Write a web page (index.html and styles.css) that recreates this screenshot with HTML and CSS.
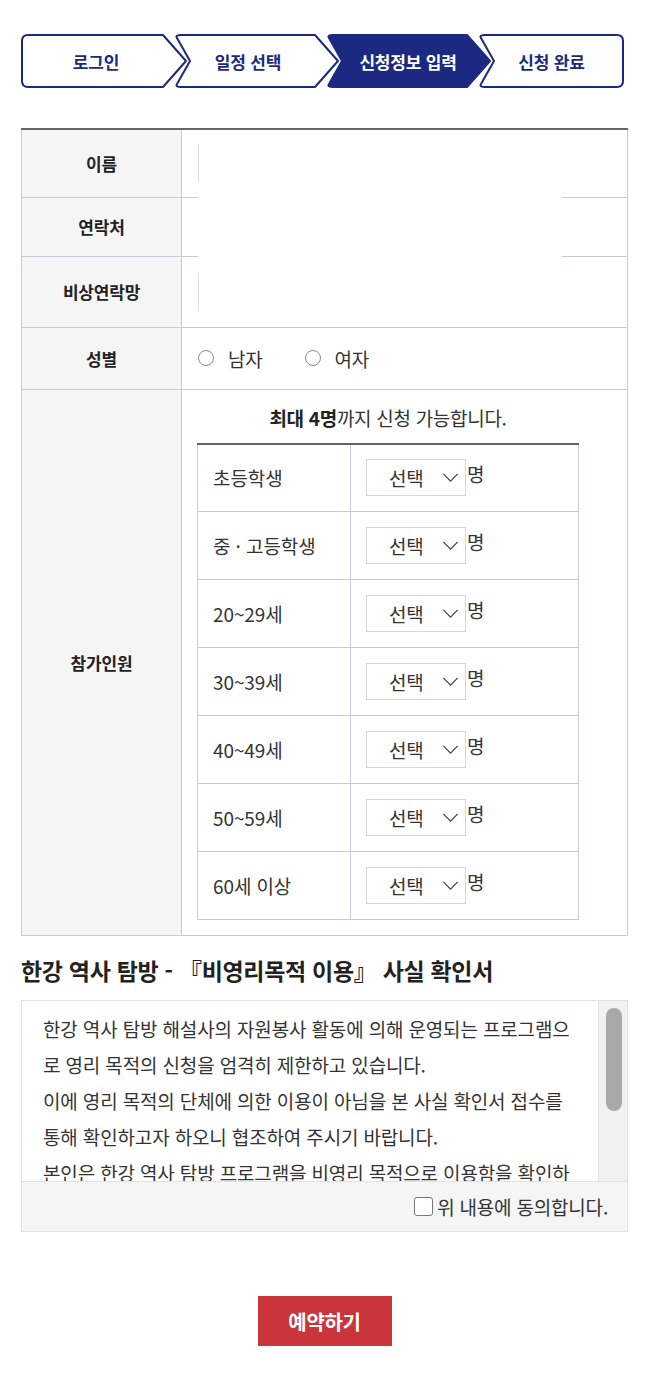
FILE: index.html
```html
<!DOCTYPE html>
<html lang="ko">
<head>
<meta charset="utf-8">
<title>신청정보 입력</title>
<link rel="stylesheet" href="styles.css">
</head>
<body>
<div class="page">
  <ol class="steps">
    <li class="step step-1">
      <svg class="step-shape" viewBox="0 0 166 54" preserveAspectRatio="none"><path d="M7 1 H142 L165 27 L142 53 H7 Q1 53 1 47 V7 Q1 1 7 1 Z"/></svg>
      <span class="step-label">로그인</span>
    </li>
    <li class="step step-2">
      <svg class="step-shape" viewBox="0 0 166 54" preserveAspectRatio="none"><path d="M8 1 H142 L165 27 L142 53 H8 Q2 53 4 50 L17 27 L4 4 Q2 1 8 1 Z"/></svg>
      <span class="step-label">일정 선택</span>
    </li>
    <li class="step step-3 is-current">
      <svg class="step-shape" viewBox="0 0 166 54" preserveAspectRatio="none"><path d="M8 1 H142 L165 27 L142 53 H8 Q2 53 4 50 L17 27 L4 4 Q2 1 8 1 Z"/></svg>
      <span class="step-label">신청정보 입력</span>
    </li>
    <li class="step step-4">
      <svg class="step-shape" viewBox="0 0 147 54" preserveAspectRatio="none"><path d="M8 1 H140 Q146 1 146 7 V47 Q146 53 140 53 H8 Q2 53 4 50 L17 27 L4 4 Q2 1 8 1 Z"/></svg>
      <span class="step-label">신청 완료</span>
    </li>
  </ol>

  <div class="form-wrap">
    <table class="form-table">
      <tr class="row-name">
        <th>이름</th>
        <td><input class="text-input" type="text"></td>
      </tr>
      <tr class="row-phone">
        <th>연락처</th>
        <td><input class="text-input" type="text"></td>
      </tr>
      <tr class="row-emergency">
        <th>비상연락망</th>
        <td><input class="text-input" type="text"></td>
      </tr>
      <tr class="row-gender">
        <th>성별</th>
        <td>
          <div class="radio-group">
            <label class="radio"><input type="radio" name="gender"><span>남자</span></label>
            <label class="radio"><input type="radio" name="gender"><span>여자</span></label>
          </div>
        </td>
      </tr>
      <tr class="row-people">
        <th>참가인원</th>
        <td class="people-cell">
          <div class="people-inner">
            <p class="people-note"><strong>최대 4명</strong>까지 신청 가능합니다.</p>
            <table class="people-table">
              <tr><td class="age">초등학생</td><td class="count"><span class="select-wrap"><select><option>선택</option></select><svg class="select-arrow" viewBox="0 0 18 10"><path d="M1 1 L9 9 L17 1"/></svg></span><span class="unit">명</span></td></tr>
              <tr><td class="age">중 · 고등학생</td><td class="count"><span class="select-wrap"><select><option>선택</option></select><svg class="select-arrow" viewBox="0 0 18 10"><path d="M1 1 L9 9 L17 1"/></svg></span><span class="unit">명</span></td></tr>
              <tr><td class="age">20~29세</td><td class="count"><span class="select-wrap"><select><option>선택</option></select><svg class="select-arrow" viewBox="0 0 18 10"><path d="M1 1 L9 9 L17 1"/></svg></span><span class="unit">명</span></td></tr>
              <tr><td class="age">30~39세</td><td class="count"><span class="select-wrap"><select><option>선택</option></select><svg class="select-arrow" viewBox="0 0 18 10"><path d="M1 1 L9 9 L17 1"/></svg></span><span class="unit">명</span></td></tr>
              <tr><td class="age">40~49세</td><td class="count"><span class="select-wrap"><select><option>선택</option></select><svg class="select-arrow" viewBox="0 0 18 10"><path d="M1 1 L9 9 L17 1"/></svg></span><span class="unit">명</span></td></tr>
              <tr><td class="age">50~59세</td><td class="count"><span class="select-wrap"><select><option>선택</option></select><svg class="select-arrow" viewBox="0 0 18 10"><path d="M1 1 L9 9 L17 1"/></svg></span><span class="unit">명</span></td></tr>
              <tr><td class="age">60세 이상</td><td class="count"><span class="select-wrap"><select><option>선택</option></select><svg class="select-arrow" viewBox="0 0 18 10"><path d="M1 1 L9 9 L17 1"/></svg></span><span class="unit">명</span></td></tr>
            </table>
          </div>
        </td>
      </tr>
    </table>
    <div class="redact"></div>
  </div>

  <h3 class="agree-title">한강 역사 탐방 - 『비영리목적 이용』 사실 확인서</h3>
  <div class="agree-box">
    <div class="agree-body">
      <div class="agree-text">
        <p>한강 역사 탐방 해설사의 자원봉사 활동에 의해 운영되는 프로그램으로 영리 목적의 신청을 엄격히 제한하고 있습니다.</p>
        <p>이에 영리 목적의 단체에 의한 이용이 아님을 본 사실 확인서 접수를 통해 확인하고자 하오니 협조하여 주시기 바랍니다.</p>
        <p>본인은 한강 역사 탐방 프로그램을 비영리 목적으로 이용함을 확인하며, 이를 위반할 경우 발생하는 불이익을 감수합니다.</p>
      </div>
      <div class="scrollbar"><div class="scrollbar-thumb"></div></div>
    </div>
    <div class="agree-foot">
      <label class="agree-check"><input type="checkbox"><span>위 내용에 동의합니다.</span></label>
    </div>
  </div>

  <div class="btn-wrap">
    <button class="btn-reserve" type="button">예약하기</button>
  </div>
</div>
</body>
</html>
```

FILE: styles.css
```css
* { box-sizing: border-box; }

html, body {
  margin: 0;
  padding: 0;
  background: #fff;
}

body {
  font-family: "Noto Sans CJK KR", "Noto Sans", sans-serif;
  color: #333;
  font-size: 19px;
}

.page {
  width: 607px;
  margin-left: 21px;
  padding-top: 34px;
  padding-bottom: 36px;
}

/* ---------- steps ---------- */
.steps {
  list-style: none;
  margin: 0;
  padding: 0;
  display: flex;
  height: 54px;
}

.step {
  position: relative;
  width: 166px;
  height: 54px;
  flex: none;
  display: flex;
  align-items: center;
  justify-content: center;
}

.step + .step { margin-left: -14px; }

.step-1 { z-index: 4; padding: 0 28px 0 12px; }
.step-2 { z-index: 3; padding: 0 28px 0 12px; }
.step-3 { z-index: 2; padding: 0 14px 0 14px; }
.step-4 { z-index: 1; width: 147px; padding: 0 2px 0 4px; }

.step-shape {
  position: absolute;
  left: 0;
  top: 0;
  width: 100%;
  height: 100%;
  overflow: visible;
}

.step-shape path {
  fill: #fff;
  stroke: #1b2a80;
  stroke-width: 2;
  stroke-linejoin: round;
}

.is-current .step-shape path { fill: #1b2a80; }

.step-label {
  position: relative;
  font-size: 17px;
  font-weight: 700;
  color: #1b2a80;
  letter-spacing: -0.2px;
  white-space: nowrap;
}

.is-current .step-label { color: #fff; }

/* ---------- form table ---------- */
.form-wrap {
  position: relative;
  margin-top: 40px;
}

.form-table {
  width: 100%;
  border-collapse: collapse;
  border-top: 2px solid #666;
}

.form-table > tbody > tr > th,
.form-table > tbody > tr > td {
  border: 1px solid #c4cbe0;
}

.form-table > tbody > tr:first-child > th,
.form-table > tbody > tr:first-child > td { border-top: 2px solid #666; }

.form-table > tbody > tr > th {
  width: 160px;
  background: #f5f5f5;
  font-size: 17px;
  font-weight: 700;
  color: #222;
  letter-spacing: -0.2px;
}

.form-table > tbody > tr > td {
  padding: 0 16px;
  text-align: left;
}

.row-name { height: 68px; }
.row-phone { height: 59px; }
.row-emergency { height: 71px; }
.row-gender { height: 62px; }

.text-input {
  display: block;
  width: 364px;
  height: 38px;
  border: none;
  border-left: 1px solid #ddd;
  background: #fff;
  font: inherit;
  padding: 0 12px;
  outline: none;
}

.redact {
  position: absolute;
  left: 177px;
  top: 57px;
  width: 364px;
  height: 84px;
  background: #fff;
}

.radio-group {
  display: flex;
  align-items: center;
  gap: 42px;
}

.radio {
  display: flex;
  align-items: center;
  gap: 14px;
  font-size: 19px;
  color: #333;
  letter-spacing: -0.2px;
}

.radio input {
  appearance: none;
  -webkit-appearance: none;
  margin: 0;
  width: 16px;
  height: 16px;
  border: 1px solid #8a8a8a;
  border-radius: 50%;
  background: #fff;
}

/* ---------- people ---------- */
.form-table > tbody > tr > td.people-cell {
  padding: 0 48px 15px 15px;
  vertical-align: top;
}

.people-inner { width: 382px; }

.people-note {
  margin: 0;
  padding-top: 15px;
  padding-bottom: 12px;
  line-height: 26px;
  text-align: center;
  font-size: 19px;
  color: #333;
  letter-spacing: -0.3px;
}

.people-note strong { color: #222; }

.people-table {
  width: 100%;
  border-collapse: collapse;
  border-top: 2px solid #666;
}

.people-table tr { height: 68px; }

.people-table td {
  border: 1px solid #c4cbe0;
  font-size: 19px;
  color: #333;
  letter-spacing: -0.1px;
}

.people-table tr:first-child td { border-top: 2px solid #666; }

.people-table td.age {
  width: 153px;
  padding-left: 15px;
}

.people-table td.count {
  padding-left: 15px;
  white-space: nowrap;
}

.select-wrap {
  position: relative;
  display: inline-block;
  vertical-align: middle;
}

.select-wrap select {
  appearance: none;
  -webkit-appearance: none;
  width: 100px;
  height: 37px;
  border: 1px solid #d6d6d6;
  border-radius: 0;
  background: #fff;
  padding: 0 0 0 22px;
  font: inherit;
  font-size: 19px;
  color: #333;
  letter-spacing: -0.2px;
}

.select-arrow {
  position: absolute;
  right: 7px;
  top: 14px;
  width: 17px;
  height: 9px;
  pointer-events: none;
}

.select-arrow path {
  fill: none;
  stroke: #444;
  stroke-width: 1.4;
}

.unit {
  display: inline-block;
  vertical-align: middle;
  margin-left: 1px;
  margin-top: -8px;
  color: #333;
}

/* ---------- agreement ---------- */
.agree-title {
  margin: 20px 0 16px;
  font-size: 23px;
  line-height: 28px;
  font-weight: 700;
  color: #222;
  letter-spacing: -0.3px;
}

.agree-box {
  border: 1px solid #e2e2e2;
}

.agree-body {
  display: flex;
  height: 180px;
}

.agree-text {
  flex: 1;
  overflow: hidden;
  padding: 10px 22px 0 21px;
  font-size: 19px;
  line-height: 36px;
  color: #333;
  letter-spacing: -0.15px;
  word-break: break-all;
}

.agree-text p { margin: 0; }

.scrollbar {
  flex: none;
  width: 29px;
  background: #f1f1f1;
  border-left: 1px solid #e4e4e4;
  padding: 7px 5px 0 7px;
}

.scrollbar-thumb {
  height: 103px;
  border-radius: 8px;
  background: #a8a8a8;
}

.agree-foot {
  height: 50px;
  border-top: 1px solid #e2e2e2;
  background: #f5f5f5;
  display: flex;
  align-items: center;
  justify-content: flex-end;
  padding-right: 19px;
}

.agree-check {
  display: flex;
  align-items: center;
  gap: 4px;
  font-size: 19px;
  color: #333;
  letter-spacing: -0.2px;
}

.agree-check input {
  appearance: none;
  -webkit-appearance: none;
  margin: 0;
  width: 19px;
  height: 19px;
  border: 1px solid #777;
  border-radius: 3px;
  background: #fff;
}

/* ---------- button ---------- */
.btn-wrap {
  display: flex;
  justify-content: center;
  margin-top: 64px;
}

.btn-reserve {
  width: 134px;
  height: 50px;
  border: none;
  background: #c9353a;
  color: #fff;
  font-family: inherit;
  font-size: 20px;
  font-weight: 700;
  letter-spacing: -0.3px;
}
```
